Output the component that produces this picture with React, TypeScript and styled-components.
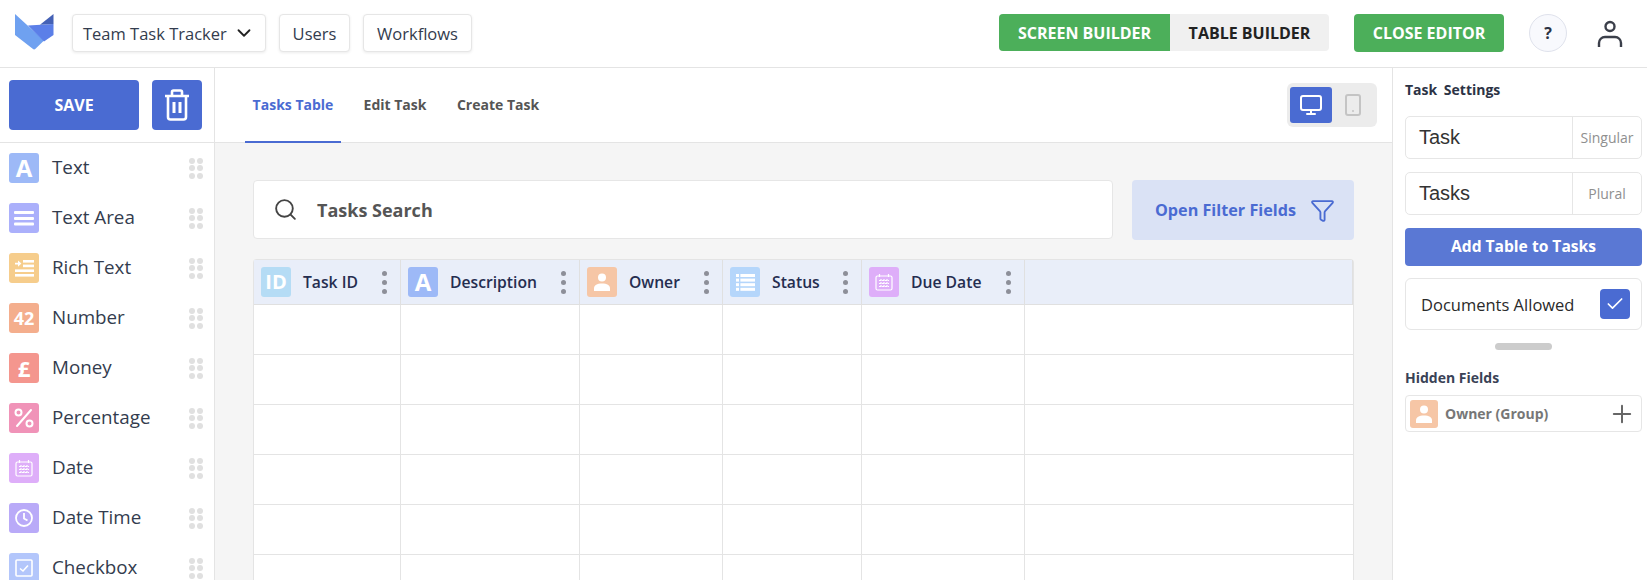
import React from "react";
import styled, { createGlobalStyle } from "styled-components";
import { ChevronDown, Filter, Monitor, Search, Smartphone, Plus, Check } from "lucide-react";

const GlobalStyle = createGlobalStyle`
  html, body {
    margin: 0;
    height: 100%;
    overflow: hidden;
    background: #fff;
    font-family: "Open Sans", "Liberation Sans", sans-serif;
  }
  * { box-sizing: border-box; }
`;

const Page = styled.div`
  width: 1647px;
  height: 580px;
  display: flex;
  flex-direction: column;
  overflow: hidden;
`;

const Header = styled.header`
  height: 68px;
  flex: none;
  display: flex;
  align-items: flex-start;
  padding: 14px 24px 0 15px;
  border-bottom: 1px solid #e4e4e4;
`;

const Logo = styled.svg`
  width: 39px;
  height: 36px;
  margin-right: 18px;
  flex: none;
`;

const NavButton = styled.div<{ $width: number; $centered?: boolean }>`
  width: ${(p) => p.$width}px;
  height: 38px;
  margin-right: 13px;
  padding: 0 10px;
  display: flex;
  align-items: center;
  justify-content: ${(p) => (p.$centered ? "center" : "space-between")};
  background: #fff;
  border: 1px solid #e6e6e6;
  border-radius: 4px;
  box-shadow: 0 1px 3px rgba(0, 0, 0, 0.08);
  color: #333c4e;
  font-size: 16.5px;
  white-space: nowrap;
`;

const Spacer = styled.div`
  flex: 1;
`;

const BuilderSwitch = styled.div`
  display: flex;
  height: 37px;
  margin-right: 25px;
  background: #f0f0f0;
  border-radius: 4px;
  overflow: hidden;
`;

const BuilderTab = styled.div<{ $active?: boolean; $width: number }>`
  width: ${(p) => p.$width}px;
  display: flex;
  align-items: center;
  justify-content: center;
  font-size: 16px;
  font-weight: 700;
  background: ${(p) => (p.$active ? "#4caf5a" : "transparent")};
  color: ${(p) => (p.$active ? "#fff" : "#222")};
`;

const CloseButton = styled.div`
  width: 150px;
  height: 38px;
  display: flex;
  align-items: center;
  justify-content: center;
  background: #4caf5a;
  color: #fff;
  border-radius: 4px;
  font-size: 16px;
  font-weight: 700;
`;

const HelpButton = styled.div`
  width: 38px;
  height: 38px;
  margin-left: 25px;
  display: flex;
  align-items: center;
  justify-content: center;
  border: 1px solid #dfe2ec;
  border-radius: 50%;
  background: #f8f9fd;
  color: #2c3345;
  font-size: 16px;
  font-weight: 700;
`;

const UserIcon = styled.svg`
  width: 26px;
  height: 28px;
  margin: 6px 0 0 30px;
`;

const Workspace = styled.div`
  flex: 1;
  display: flex;
  min-height: 0;
`;

const Sidebar = styled.aside`
  width: 215px;
  flex: none;
  border-right: 1px solid #e4e4e4;
`;

const SidebarTop = styled.div`
  height: 75px;
  padding: 12px 12px 0 9px;
  display: flex;
  gap: 13px;
  border-bottom: 1px solid #e4e4e4;
`;

const SaveButton = styled.div`
  width: 130px;
  height: 50px;
  padding-bottom: 1px;
  display: flex;
  align-items: center;
  justify-content: center;
  background: #4a6bd2;
  border-radius: 4px;
  color: #fff;
  font-size: 16px;
  font-weight: 700;
`;

const TrashButton = styled.div`
  width: 50px;
  height: 50px;
  display: flex;
  align-items: center;
  justify-content: center;
  background: #4a6bd2;
  border-radius: 4px;
`;

const FieldList = styled.div`
  padding: 10px 12px 0 9px;
  display: flex;
  flex-direction: column;
  gap: 20px;
`;

const FieldRow = styled.div`
  height: 30px;
  display: flex;
  align-items: center;
  flex: none;
`;

const FieldName = styled.span`
  flex: 1;
  margin-left: 13px;
  padding-bottom: 2px;
  color: #333c4e;
  font-size: 18.8px;
`;

const IconTile = styled.div<{ $bg: string; $size?: number }>`
  width: ${(p) => p.$size ?? 30}px;
  height: ${(p) => p.$size ?? 30}px;
  flex: none;
  display: flex;
  align-items: center;
  justify-content: center;
  border-radius: 3px;
  background: ${(p) => p.$bg};
  color: #fff;
  font-weight: 700;
`;

const Glyph = styled.span<{ $size: number }>`
  font-size: ${(p) => p.$size}px;
  line-height: 1;
`;

const DragDots = styled.div`
  width: 13px;
  display: grid;
  grid-template-columns: 6px 6px;
  gap: 1.5px;
`;

const Dot = styled.i`
  width: 6px;
  height: 6px;
  border-radius: 50%;
  background: #e0e0e0;
`;

const Main = styled.main`
  flex: 1;
  min-width: 0;
  display: flex;
  flex-direction: column;
  background: #f5f5f5;
  border-right: 1px solid #e4e4e4;
`;

const TabBar = styled.div`
  height: 75px;
  flex: none;
  display: flex;
  align-items: flex-start;
  justify-content: space-between;
  padding: 0 15px 0 30px;
  background: #fff;
  border-bottom: 1px solid #e4e4e4;
`;

const Tabs = styled.div`
  display: flex;
  height: 75px;
`;

const Tab = styled.div<{ $active?: boolean; $width: number }>`
  width: ${(p) => p.$width}px;
  height: 75px;
  display: flex;
  align-items: center;
  justify-content: center;
  font-size: 14px;
  font-weight: 700;
  color: ${(p) => (p.$active ? "#4a6bd2" : "#555")};
  border-bottom: 2px solid ${(p) => (p.$active ? "#4a6bd2" : "transparent")};
`;

const DeviceSwitch = styled.div`
  margin-top: 15px;
  width: 90px;
  height: 44px;
  padding: 4px 3px;
  display: flex;
  background: #ececec;
  border-radius: 6px;
`;

const DeviceButton = styled.div<{ $active?: boolean }>`
  width: 42px;
  height: 36px;
  display: flex;
  align-items: center;
  justify-content: center;
  border-radius: 3px;
  background: ${(p) => (p.$active ? "#4a6bd2" : "transparent")};
  color: ${(p) => (p.$active ? "#fff" : "#c4c4c4")};
`;

const Content = styled.div`
  padding: 37px 38px 0 38px;
`;

const SearchRow = styled.div`
  display: flex;
  gap: 19px;
  margin-bottom: 19px;
`;

const SearchBox = styled.div`
  flex: 1;
  height: 59px;
  display: flex;
  align-items: center;
  gap: 19px;
  padding-left: 19px;
  background: #fff;
  border: 1px solid #e6e6e6;
  border-radius: 4px;
  color: #555;
  font-size: 18px;
  font-weight: 700;
`;

const FilterButton = styled.div`
  width: 222px;
  height: 60px;
  padding-left: 4px;
  display: flex;
  align-items: center;
  justify-content: center;
  gap: 14px;
  background: #dae2f5;
  border-radius: 4px;
  color: #4a6bd2;
  font-size: 16.2px;
  font-weight: 700;
`;

const Table = styled.div`
  display: grid;
  grid-template-columns: 147px 179px 143px 139px 163px 1fr;
  grid-template-rows: 45px;
  grid-auto-rows: 50px;
  background: #fff;
  border: 1px solid #e4e4e4;
  border-bottom: none;
  border-radius: 4px 4px 0 0;
`;

const HeadCell = styled.div`
  display: flex;
  align-items: center;
  padding-left: 7px;
  background: #e9eef9;
  border-right: 1px solid #e0e0e0;
  border-bottom: 1px solid #e0e0e0;
  &:last-of-type { border-right: none; }
`;

const HeadLabel = styled.span`
  flex: 1;
  margin-left: 12px;
  padding-bottom: 1px;
  color: #252d50;
  font-size: 15.7px;
  font-weight: 600;
  white-space: nowrap;
`;

const KebabWrap = styled.div`
  width: 5px;
  margin-right: 13px;
  display: flex;
  flex-direction: column;
  gap: 4px;
`;

const KebabDot = styled.i`
  width: 5px;
  height: 5px;
  border-radius: 50%;
  background: #8d8f99;
`;

const BodyCell = styled.div<{ $last: boolean }>`
  border-right: ${(p) => (p.$last ? "none" : "1px solid #e4e4e4")};
  border-bottom: 1px solid #e4e4e4;
`;

const Settings = styled.aside`
  width: 254px;
  flex: none;
  padding: 13px 5px 0 12px;
`;

const PanelTitle = styled.div<{ $spaced?: boolean }>`
  color: ${(p) => (p.$spaced ? "#2c3345" : "#3a4256")};
  font-size: 14px;
  font-weight: 700;
  word-spacing: ${(p) => (p.$spaced ? 3 : 0)}px;
  line-height: 18px;
`;

const NameField = styled.div`
  height: 43px;
  margin-top: 17px;
  display: flex;
  border: 1px solid #e6e6e6;
  border-radius: 5px;
  & + & { margin-top: 13px; }
`;

const NameValue = styled.div`
  flex: 1;
  padding-left: 13px;
  display: flex;
  align-items: center;
  color: #333;
  font-family: "Liberation Sans", sans-serif;
  font-size: 20px;
`;

const NameHint = styled.div`
  width: 69px;
  display: flex;
  align-items: center;
  justify-content: center;
  border-left: 1px solid #e6e6e6;
  color: #8f8f8f;
  font-size: 14px;
`;

const AddButton = styled.div`
  height: 38px;
  margin-top: 13px;
  padding-bottom: 2px;
  display: flex;
  align-items: center;
  justify-content: center;
  background: #5a78d4;
  border-radius: 4px;
  color: #fff;
  font-size: 15.6px;
  font-weight: 700;
`;

const DocumentsRow = styled.div`
  height: 52px;
  margin-top: 12px;
  padding: 0 11px 0 15px;
  display: flex;
  align-items: center;
  justify-content: space-between;
  border: 1px solid #e6e6e6;
  border-radius: 6px;
  color: #2a2a2a;
  font-size: 16.5px;
`;

const CheckTile = styled.div`
  width: 30px;
  height: 30px;
  display: flex;
  align-items: center;
  justify-content: center;
  border-radius: 4px;
  background: #4a6bd2;
  color: #fff;
`;

const Handle = styled.div`
  width: 57px;
  height: 7px;
  margin: 13px auto 19px;
  border-radius: 4px;
  background: #ccc;
`;

const HiddenRow = styled.div`
  height: 37px;
  margin-top: 8px;
  padding: 0 5px 0 4px;
  display: flex;
  align-items: center;
  border: 1px solid #e6e6e6;
  border-radius: 4px;
  color: #777;
  font-size: 14px;
  font-weight: 700;
`;

const HiddenLabel = styled.span`
  flex: 1;
  margin-left: 7px;
`;

const TrashIcon = () => (
  <svg width="26" height="32" viewBox="0 0 26 32" fill="none" stroke="#fff" strokeWidth="2.6">
    <path d="M1 7h24M8 7V3a1.5 1.5 0 0 1 1.5-1.5h7A1.5 1.5 0 0 1 18 3v4M4 7v21a2.5 2.5 0 0 0 2.5 2.5h13A2.5 2.5 0 0 0 22 28V7" />
    <path d="M10 13v11M16 13v11" strokeWidth="3" />
  </svg>
);

const LinesIcon = () => (
  <svg width="20" height="16" viewBox="0 0 20 16" fill="#fff">
    <rect y="1" width="20" height="3" rx="1" />
    <rect y="7" width="20" height="3" rx="1" />
    <rect y="12.5" width="20" height="3" rx="1" />
  </svg>
);

const RichIcon = () => (
  <svg width="19" height="17" viewBox="0 0 19 17" fill="#fff">
    <rect x="8" y="0" width="11" height="2.6" />
    <rect x="8" y="4.6" width="11" height="2.6" />
    <rect y="9.4" width="19" height="2.6" />
    <rect y="14" width="19" height="2.6" />
    <path d="M0 2.8h3V.5l3.4 3.1L3 6.7V4.4H0z" />
  </svg>
);

const PercentIcon = () => (
  <svg width="20" height="20" viewBox="0 0 20 20" fill="none" stroke="#fff" strokeWidth="2">
    <circle cx="4.5" cy="4.5" r="3" />
    <circle cx="15.5" cy="15.5" r="3" />
    <path d="M17 2L3 18" strokeLinecap="round" />
  </svg>
);

const CalendarIcon = () => (
  <svg width="18" height="18" viewBox="0 0 18 18" fill="none" stroke="#fff" strokeWidth="1.2">
    <rect x="1" y="3" width="16" height="14" rx="1.5" />
    <path d="M4.5 1v3M13.5 1v3" />
    <path d="M4 7.5h10M4 10.5h10M4 13.5h10M6 6v9M9 6v9M12 6v9" strokeDasharray="2 1" />
  </svg>
);

const ClockIcon = () => (
  <svg width="20" height="20" viewBox="0 0 20 20" fill="none" stroke="#fff" strokeWidth="1.8">
    <circle cx="10" cy="10" r="8" />
    <path d="M10 5v5.5l3.5 2" />
  </svg>
);

const CheckboxIcon = () => (
  <svg width="18" height="18" viewBox="0 0 18 18" fill="none" stroke="#fff" strokeWidth="1.6">
    <rect x="1" y="1" width="16" height="16" rx="1" />
    <path d="M5 9.5l3 2.5 5-5.5" />
  </svg>
);

const PersonIcon = () => (
  <svg width="20" height="20" viewBox="0 0 20 20" fill="#fff">
    <circle cx="10" cy="5.5" r="4" />
    <path d="M2 19v-2.5C2 13 5 11.5 10 11.5s8 1.5 8 5V19z" />
  </svg>
);

const ListIcon = () => (
  <svg width="19" height="18" viewBox="0 0 19 18" fill="#fff">
    <rect y="1" width="3" height="3" />
    <rect y="5.6" width="3" height="3" />
    <rect y="10.2" width="3" height="3" />
    <rect y="14.8" width="3" height="3" />
    <rect x="4.4" y="1" width="14.6" height="3" />
    <rect x="4.4" y="5.6" width="14.6" height="3" />
    <rect x="4.4" y="10.2" width="14.6" height="3" />
    <rect x="4.4" y="14.8" width="14.6" height="3" />
  </svg>
);

const fields: { name: string; bg: string; icon: React.ReactNode }[] = [
  { name: "Text", bg: "#9db9f7", icon: <Glyph $size={24}>A</Glyph> },
  { name: "Text Area", bg: "#abb0fb", icon: <LinesIcon /> },
  { name: "Rich Text", bg: "#f6cd8c", icon: <RichIcon /> },
  { name: "Number", bg: "#f4ae8d", icon: <Glyph $size={18}>42</Glyph> },
  { name: "Money", bg: "#f4968e", icon: <Glyph $size={22}>£</Glyph> },
  { name: "Percentage", bg: "#f093b8", icon: <PercentIcon /> },
  { name: "Date", bg: "#deaef9", icon: <CalendarIcon /> },
  { name: "Date Time", bg: "#b9aaf8", icon: <ClockIcon /> },
  { name: "Checkbox", bg: "#b3c6fb", icon: <CheckboxIcon /> },
];

const columns: { name: string; bg: string; icon: React.ReactNode }[] = [
  { name: "Task ID", bg: "#b5dcf5", icon: <Glyph $size={20}>ID</Glyph> },
  { name: "Description", bg: "#9db9f7", icon: <Glyph $size={24}>A</Glyph> },
  { name: "Owner", bg: "#f6c6a6", icon: <PersonIcon /> },
  { name: "Status", bg: "#b5d6fb", icon: <ListIcon /> },
  { name: "Due Date", bg: "#deaef9", icon: <CalendarIcon /> },
];

const Kebab = () => (
  <KebabWrap>
    <KebabDot />
    <KebabDot />
    <KebabDot />
  </KebabWrap>
);

export default function App() {
  return (
    <Page>
      <GlobalStyle />
      <Header>
        <Logo viewBox="0 0 39 36">
          <path d="M0 0L29 26.5 20.5 34.8a2 2 0 0 1-2.8 0L0 21z" fill="#6fa1f0" />
          <path d="M13 11.5L38.5 10v11L29 27.5z" fill="#5b7fe8" />
          <path d="M25 10.7L38.5 0v10z" fill="#4461b5" />
        </Logo>
        <NavButton $width={194}>
          Team Task Tracker
          <ChevronDown size={22} color="#222" />
        </NavButton>
        <NavButton $width={71} $centered>Users</NavButton>
        <NavButton $width={109} $centered>Workflows</NavButton>
        <Spacer />
        <BuilderSwitch>
          <BuilderTab $active $width={171}>SCREEN BUILDER</BuilderTab>
          <BuilderTab $width={159}>TABLE BUILDER</BuilderTab>
        </BuilderSwitch>
        <CloseButton>CLOSE EDITOR</CloseButton>
        <HelpButton>?</HelpButton>
        <UserIcon viewBox="0 0 26 28" fill="none" stroke="#3b3f4a" strokeWidth="2.4">
          <circle cx="13" cy="6.5" r="4.5" />
          <path d="M2 27v-4a6 6 0 0 1 6-6h10a6 6 0 0 1 6 6v4" />
        </UserIcon>
      </Header>
      <Workspace>
        <Sidebar>
          <SidebarTop>
            <SaveButton>SAVE</SaveButton>
            <TrashButton><TrashIcon /></TrashButton>
          </SidebarTop>
          <FieldList>
            {fields.map((f) => (
              <FieldRow key={f.name}>
                <IconTile $bg={f.bg}>{f.icon}</IconTile>
                <FieldName>{f.name}</FieldName>
                <DragDots>
                  {Array.from({ length: 6 }, (_, i) => <Dot key={i} />)}
                </DragDots>
              </FieldRow>
            ))}
          </FieldList>
        </Sidebar>
        <Main>
          <TabBar>
            <Tabs>
              <Tab $active $width={96}>Tasks Table</Tab>
              <Tab $width={108}>Edit Task</Tab>
              <Tab $width={98}>Create Task</Tab>
            </Tabs>
            <DeviceSwitch>
              <DeviceButton $active><Monitor size={24} /></DeviceButton>
              <DeviceButton><Smartphone size={24} /></DeviceButton>
            </DeviceSwitch>
          </TabBar>
          <Content>
            <SearchRow>
              <SearchBox>
                <Search size={25} color="#444" strokeWidth={1.8} />
                Tasks Search
              </SearchBox>
              <FilterButton>
                Open Filter Fields
                <Filter size={25} strokeWidth={1.8} />
              </FilterButton>
            </SearchRow>
            <Table>
              {columns.map((c) => (
                <HeadCell key={c.name}>
                  <IconTile $bg={c.bg}>{c.icon}</IconTile>
                  <HeadLabel>{c.name}</HeadLabel>
                  <Kebab />
                </HeadCell>
              ))}
              <HeadCell />
              {Array.from({ length: 36 }, (_, i) => <BodyCell key={i} $last={i % 6 === 5} />)}
            </Table>
          </Content>
        </Main>
        <Settings>
          <PanelTitle $spaced>Task Settings</PanelTitle>
          <NameField>
            <NameValue>Task</NameValue>
            <NameHint>Singular</NameHint>
          </NameField>
          <NameField>
            <NameValue>Tasks</NameValue>
            <NameHint>Plural</NameHint>
          </NameField>
          <AddButton>Add Table to Tasks</AddButton>
          <DocumentsRow>
            Documents Allowed
            <CheckTile><Check size={20} strokeWidth={2} /></CheckTile>
          </DocumentsRow>
          <Handle />
          <PanelTitle>Hidden Fields</PanelTitle>
          <HiddenRow>
            <IconTile $bg="#f6c6a6" $size={28}><PersonIcon /></IconTile>
            <HiddenLabel>Owner (Group)</HiddenLabel>
            <Plus size={28} color="#666" strokeWidth={1.7} />
          </HiddenRow>
        </Settings>
      </Workspace>
    </Page>
  );
}
